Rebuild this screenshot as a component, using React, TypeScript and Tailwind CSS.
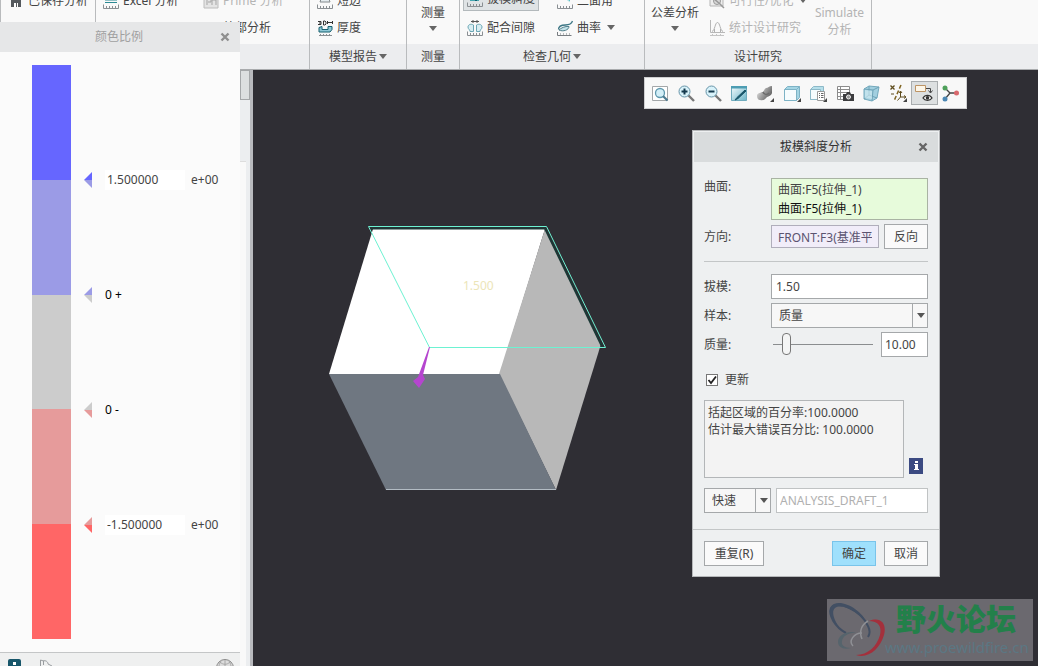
import { useState } from "react";
import type { ReactNode } from "react";
import clsx from "clsx";

interface Segment {
  color: string;
  next?: string;
  label?: string;
  value?: string;
}

const segments: Segment[] = [
  { color: "#6666ff", next: "#9b9be6", value: "1.500000" },
  { color: "#9b9be6", next: "#cccccc", label: "0 +" },
  { color: "#cccccc", next: "#e69b9b", label: "0 -" },
  { color: "#e69b9b", next: "#ff6666", value: "-1.500000" },
  { color: "#ff6666" },
];

/* ---------- small shared pieces ---------- */

const Caret = ({ className }: { className?: string }) => (
  <svg
    viewBox="0 0 8 5"
    className={clsx("h-[5px] w-2 shrink-0 fill-current", className)}
  >
    <path d="M0 0h8L4 5z" />
  </svg>
);

const CloseIcon = () => (
  <svg viewBox="0 0 10 10" className="h-[10px] w-[10px]">
    <path d="M1.500 1.500l7 7M8.500 1.500l-7 7" stroke="currentColor" strokeWidth="2.400" />
  </svg>
);

const Icon = ({ children }: { children: ReactNode }) => (
  <svg viewBox="0 0 16 16" className="h-4 w-4 shrink-0" fill="none">
    {children}
  </svg>
);

const Ruler = ({ color = "#8a8f93" }: { color?: string }) => (
  <path d="M.5 11.5v4h15v-4M3.5 13v2M6.5 13v2M9.5 13v2M12.5 13v2" stroke={color} />
);

/* ---------- ribbon ---------- */

const SaveIcon = () => (
  <Icon>
    <path d="M3 2h10v12H3z" fill="#55595d" />
    <path d="M5 2h6v5H5z" fill="#fff" />
    <path d="M6 10h4v4H6z" fill="#fff" />
    <path d="M8 10h1v4H8z" fill="#55595d" />
  </Icon>
);

const ExcelIcon = () => (
  <Icon>
    <path d="M2 7l3-5h7l2 5z" fill="#8ccbd0" stroke="#2c8a94" />
    <path d="M2 9.5h12" stroke="#2c8a94" />
    <Ruler />
  </Icon>
);

const PrimeIcon = () => (
  <Icon>
    <path d="M1 3h14v12H1z" fill="#e4e4e4" stroke="#bcbcbc" />
    <path d="M4 12V5h4v4H5M9 12V7h4v5" stroke="#a5a5a5" />
  </Icon>
);

const EdgeIcon = () => (
  <Icon>
    <path d="M3 9l2-6h6l2 6z" fill="#e6edf0" stroke="#848a8e" />
    <Ruler />
  </Icon>
);

const ThicknessIcon = () => (
  <Icon>
    <path d="M1 1.5h3v3H1M2 3h2M6.5 1v4h1.5l1-1V2L8 1zM10.5 2.5h5M10.5 1v3M15.5 1v3" stroke="#333" />
    <path d="M2 7.5l3-1v3h6v-3h4v3l-2 2.5H2z" fill="#8fc8d6" stroke="#17606f" />
    <path d="M2 15.5h13M3.5 14v1M6.5 14v1M9.5 14v1M12.5 14v1" stroke="#8a8f93" />
  </Icon>
);

const DraftIcon = () => (
  <Icon>
    <path d="M3 9h4l1-7h4v8H3z" fill="#46a7b0" />
    <path d="M8 7h2v3H8z" fill="#0d5f70" />
    <Ruler />
  </Icon>
);

const ClearanceIcon = () => (
  <Icon>
    <path d="M4 1.5h8M6 0v3M10 0v3" stroke="#555" />
    <path
      d="M6.5 5C4 3.500 1 4.500 1 7s2 2 2 4.500h3.500zM9.500 5C12 3.500 15 4.500 15 7s-2 2-2 4.500H9.500z"
      fill="#d9eef3"
      stroke="#6ba6b4"
    />
    <Ruler />
  </Icon>
);

const DihedralIcon = () => (
  <Icon>
    <path d="M4 2h9v7L8 5z" fill="#5fbfc6" />
    <path d="M4 2l9 7" stroke="#bfe8ea" />
    <Ruler />
  </Icon>
);

const CurvatureIcon = () => (
  <Icon>
    <path d="M1.500 9.500c0-4 4-4.500 7-4.500s6-.500 7-4" stroke="#3b7584" strokeWidth="1.300" />
    <path d="M2 10c4 2 10 0 10-3.500C8 6 4 8 2 10z" fill="#c5e3ea" stroke="#4f7f8b" />
    <path d="M.5 12v3.500h14M3.500 13.500v1M6.500 13.500v1M9.500 13.500v1M12.500 13.500v1" stroke="#777c80" />
  </Icon>
);

const FeasibilityIcon = () => (
  <Icon>
    <path d="M1 2h13v11H1z" fill="#eee" stroke="#b5b5b5" />
    <circle cx="8" cy="8" r="3.500" fill="#d8d8d8" stroke="#999" />
    <path d="M10.500 10.500L15 15M4 5l7 6" stroke="#999" strokeWidth="1.500" />
  </Icon>
);

const StatsIcon = () => (
  <Icon>
    <path d="M1.500 0v12.500H16" stroke="#b8b8b8" />
    <path d="M3 11.500c3-1 3-9 5.500-9s2.500 8 5.500 9M5.500 12v-3M11.500 12v-3" stroke="#b0b0b0" />
    <path d="M1 15.500h14M3.500 14v1M7.500 14v1M11.500 14v1" stroke="#c4c4c4" />
  </Icon>
);

interface RibbonGroupProps {
  title?: string;
  menu?: boolean;
  className?: string;
  children?: ReactNode;
}

const RibbonGroup = ({ title, menu, className, children }: RibbonGroupProps) => (
  <section
    className={clsx(
      "flex h-full shrink-0 flex-col border-r border-[#b9bbbd]",
      className
    )}
  >
    <div className="flex h-11 items-end overflow-hidden">{children}</div>
    <div className="flex h-[25px] items-center justify-center gap-[2px] bg-[#ecedef]">
      {title}
      {menu && <Caret className="text-[#666]" />}
    </div>
  </section>
);

interface RibbonButtonProps {
  icon: ReactNode;
  label: string;
  menu?: boolean;
  active?: boolean;
  disabled?: boolean;
}

const RibbonButton = ({ icon, label, menu, active, disabled }: RibbonButtonProps) => (
  <button
    type="button"
    disabled={disabled}
    className={clsx(
      "flex items-center gap-1 whitespace-nowrap border px-[3px]",
      active
        ? "mb-[3px] h-6 border-[#b3b9bc] bg-[#dfe3e5]"
        : "h-[27px] border-transparent",
      disabled && "text-[#b4b4b4]"
    )}
  >
    {icon}
    {label}
    {menu && <Caret className="ml-[2px] text-[#666]" />}
  </button>
);

const RibbonColumn = ({
  className,
  children,
}: {
  className?: string;
  children: ReactNode;
}) => (
  <div className={clsx("flex shrink-0 flex-col items-start pb-[3px]", className)}>
    {children}
  </div>
);

const LargeMenuButton = ({ label }: { label: string }) => (
  <button
    type="button"
    className="flex h-11 flex-col items-center gap-1 whitespace-nowrap pt-1"
  >
    <span className="leading-[18px]">{label}</span>
    <Caret className="text-[#666]" />
  </button>
);

const Ribbon = () => (
  <header className="flex h-[70px] w-full shrink-0 overflow-hidden border-b border-[#a9abad] bg-[#f9f9f9]">
    <RibbonGroup className="w-24 border-l">
      <RibbonColumn className="pl-[3px]">
        <RibbonButton icon={<SaveIcon />} label="已保存分析" />
        <div className="h-[27px]" />
      </RibbonColumn>
    </RibbonGroup>
    <RibbonGroup className="w-[214px]">
      <RibbonColumn className="w-[100px] pl-[3px]">
        <RibbonButton icon={<ExcelIcon />} label="Excel 分析" />
        <div className="h-[27px]" />
      </RibbonColumn>
      <RibbonColumn className="pl-[3px]">
        <RibbonButton icon={<PrimeIcon />} label="Prime 分析" disabled />
        <RibbonButton icon={<PrimeIcon />} label="外部分析" />
      </RibbonColumn>
    </RibbonGroup>
    <RibbonGroup title="模型报告" menu className="w-[97px]">
      <RibbonColumn className="pl-[3px]">
        <RibbonButton icon={<EdgeIcon />} label="短边" />
        <RibbonButton icon={<ThicknessIcon />} label="厚度" />
      </RibbonColumn>
    </RibbonGroup>
    <RibbonGroup title="测量" className="w-[53px]">
      <div className="flex flex-1 justify-center">
        <LargeMenuButton label="测量" />
      </div>
    </RibbonGroup>
    <RibbonGroup title="检查几何" menu className="w-[185px]">
      <RibbonColumn className="w-[90px] pl-[3px]">
        <RibbonButton icon={<DraftIcon />} label="拔模斜度" active />
        <RibbonButton icon={<ClearanceIcon />} label="配合间隙" />
      </RibbonColumn>
      <RibbonColumn className="pl-[3px]">
        <RibbonButton icon={<DihedralIcon />} label="二面角" />
        <RibbonButton icon={<CurvatureIcon />} label="曲率" menu />
      </RibbonColumn>
    </RibbonGroup>
    <RibbonGroup title="设计研究" className="w-[227px]">
      <div className="flex w-[60px] justify-center">
        <LargeMenuButton label="公差分析" />
      </div>
      <RibbonColumn className="w-[103px]">
        <RibbonButton icon={<FeasibilityIcon />} label="可行性/优化" menu disabled />
        <RibbonButton icon={<StatsIcon />} label="统计设计研究" disabled />
      </RibbonColumn>
      <button
        type="button"
        disabled
        className="flex h-11 flex-1 flex-col items-center pt-1 leading-[17px] text-[#b4b4b4]"
      >
        <span>Simulate</span>
        <span>分析</span>
      </button>
    </RibbonGroup>
    <div className="flex flex-1 flex-col">
      <div className="h-11" />
      <div className="flex-1 bg-[#ecedef]" />
    </div>
  </header>
);

/* ---------- colour scale window ---------- */

const Marker = ({ top, bottom }: { top: string; bottom?: string }) => (
  <svg viewBox="0 0 8 16" className="h-4 w-2">
    <path d="M8 0v8H0z" fill={top} />
    <path d="M8 16V8H0z" fill={bottom} />
  </svg>
);

const ColorScale = () => (
  <section className="absolute inset-y-0 left-0 z-10 flex w-60 flex-col pt-[22px]">
    <div className="flex h-[30px] shrink-0 items-center bg-[#e6e7e8] text-[#a0a0a0]">
      <h2 className="flex-1 pl-7 text-center">颜色比例</h2>
      <button
        type="button"
        aria-label="关闭"
        className="flex w-[30px] justify-center text-[#8f8f8f]"
      >
        <CloseIcon />
      </button>
    </div>
    <div className="flex flex-1 items-start overflow-hidden border-b border-[#c4c6c7] bg-[#fbfbfb] pl-8 pt-[13px]">
      <div className="flex h-[574px] w-[39px] flex-col">
        {segments.map(({ color }) => (
          <div key={color} className="flex-1" style={{ background: color }} />
        ))}
      </div>
      <div className="pl-[13px] pt-[57px]">
        {segments.slice(0, 4).map(({ color, next, label, value }) => (
          <div key={color} className="flex h-[115px] items-center">
            <Marker top={color} bottom={next} />
            {value ? (
              <label className="ml-[13px] flex items-center text-[#444]">
                <input
                  defaultValue={value}
                  className="mr-[6px] h-5 w-20 bg-white px-[2px]"
                />
                e+00
              </label>
            ) : (
              <span className="ml-[13px] text-black">{label}</span>
            )}
          </div>
        ))}
      </div>
    </div>
    <footer className="flex h-[13px] shrink-0 items-start gap-4 overflow-hidden bg-[#eff0f0] pl-[6px] pr-[5px] pt-[5px]">
      <Icon>
        <rect x="2" y="1" width="13" height="14" rx="2" fill="#17566a" />
        <path d="M7 4h3v3H7z" fill="#fff" />
      </Icon>
      <Icon>
        <path d="M2.500 15V2l3 1v4M5 3c3-1 5 1 5 3l4 2" stroke="#999da0" />
      </Icon>
      <svg viewBox="0 0 20 20" className="ml-auto h-5 w-5" fill="none">
        <circle cx="10" cy="10" r="8.500" fill="#ddd" stroke="#888" />
        <path d="M10 2v16M2 10h16M5 4c3 3 7 3 10 0M6 3c-3 5-3 9 0 14M14 3c3 5 3 9 0 14" stroke="#a8a8a8" />
      </svg>
    </footer>
  </section>
);

/* ---------- view toolbar ---------- */

const Lens = ({ sign }: { sign: string }) => (
  <>
    <path d="M11 11l6 6" stroke="#777" strokeWidth="2.400" />
    <circle cx="7.500" cy="7.500" r="5.500" fill="#d8f2fa" stroke="#6794a8" />
    <path d={sign} stroke="#14394d" strokeWidth="2" />
  </>
);

const Flyout = () => <path d="M18 14v4h-4z" fill="#444" />;

interface Tool {
  name: string;
  art: ReactNode;
  active?: boolean;
}

const tools: Tool[] = [
  {
    name: "重新调整",
    art: (
      <>
        <path d="M1.500 2.500h15v14h-15z" fill="#fff" stroke="#a3a7a9" />
        <circle cx="9" cy="9" r="4.500" fill="#d3eff8" stroke="#5f98ae" strokeWidth="1.300" />
        <path d="M12 12l4.500 4.500" stroke="#4d7d92" strokeWidth="2.200" />
      </>
    ),
  },
  { name: "放大", art: <Lens sign="M4.500 7.500h6M7.500 4.500v6" /> },
  { name: "缩小", art: <Lens sign="M4.500 7.500h6" /> },
  {
    name: "重画",
    art: (
      <>
        <defs>
          <linearGradient id="repaint" x1="0" y1="0" x2="1" y2="1">
            <stop offset="0" stopColor="#f4fbfd" />
            <stop offset="1" stopColor="#6bb5c8" />
          </linearGradient>
        </defs>
        <path d="M1.500 2.500h15v14h-15z" fill="url(#repaint)" stroke="#6fabbd" />
        <path d="M1 2h16v2.500H1z" fill="#4d9db3" />
        <path d="M15 6L7 13.500 5 16l3-1.500L16 7z" fill="#19566a" stroke="#19566a" />
      </>
    ),
  },
  {
    name: "渲染选项",
    art: (
      <>
        <defs>
          <linearGradient id="shade" x1="0" y1="0" x2="1" y2=".6">
            <stop offset="0" stopColor="#fafafa" />
            <stop offset=".55" stopColor="#9f9f9f" />
            <stop offset="1" stopColor="#626262" />
          </linearGradient>
        </defs>
        <path
          d="M1 12c0-3 3-3 5-4 2 0 2-3 4-4 2 0 3-2 6-2v7c-1 3-3 3-5 4-2 2-3 4-7 3-2 0-3-2-3-4z"
          fill="url(#shade)"
        />
        <path d="M7 8c1 3 4 3 6 1" stroke="#6c6c6c" strokeWidth="1.500" />
        <Flyout />
      </>
    ),
  },
  {
    name: "显示样式",
    art: (
      <>
        <path d="M1.500 5.500l3-3h12v11l-3 3h-12z" fill="#a4d5e4" stroke="#7db3c6" />
        <path d="M1.500 5.500h12v11h-12z" fill="#f6fcfe" stroke="#7db3c6" />
        <path d="M13.500 5.500l3-3" stroke="#7db3c6" />
        <Flyout />
      </>
    ),
  },
  {
    name: "已保存方向",
    art: (
      <>
        <path d="M1.500 5.500l3-3h10v10l-3 3h-10z" fill="#b6dfea" stroke="#8db9c8" />
        <path d="M1.500 5.500h10v10h-10z" fill="#f4fbfd" stroke="#8db9c8" />
        <path d="M8.500 7.500h7v9h-7z" fill="#fff" stroke="#999" />
        <path d="M10 9.500h1M12 9.500h2.500M10 11.500h1M12 11.500h2.500M10 13.500h1M12 13.500h2.500" stroke="#666" />
        <Flyout />
      </>
    ),
  },
  {
    name: "视图管理器",
    art: (
      <>
        <path d="M1.500 2.500h12v13h-12z" fill="#fff" />
        <path d="M1.500 2.500h12v13h-12zM1.500 5.500h12M1.500 8.500h12M1.500 12.500h12M4.500 2.500v13" stroke="#8c8c8c" />
        <path d="M7 10h3l1-2h3l1 2h3v7H7z" fill="#3c3c3e" />
        <circle cx="12.500" cy="13" r="2" fill="#999" stroke="#eee" />
      </>
    ),
  },
  {
    name: "透视图",
    art: (
      <>
        <path d="M2 5l5-3 10 1-2 11-5 3-8-2z" fill="#a2cfdf" stroke="#74a9bc" />
        <path d="M2 5l9 1 6-3M11 6l-1 11M2 15l5-4 8 3M7 11V2" stroke="#6ea3b7" />
        <path d="M3 6l7 1v8l-7-1z" fill="#d6eef5" opacity=".6" />
      </>
    ),
  },
  {
    name: "基准显示过滤器",
    art: (
      <>
        <path d="M1.500 1.500l4 4M5.500 1.500l-4 4" stroke="#5d4b1c" strokeWidth="1.300" />
        <path d="M12 1L5 17" stroke="#806522" strokeWidth="1.500" strokeDasharray="4 2" />
        <path d="M2 10h3M11.500 7.500v5.500h5M11.500 13l-3 3.500M10 9l1.500-2L13 9M15 11.500l2 1.500-2 1.500" stroke="#5d4b1c" />
        <Flyout />
      </>
    ),
  },
  {
    name: "注释显示",
    active: true,
    art: (
      <>
        <path d="M.500 1.500h10v6H.500z" fill="#fdf6e8" stroke="#bd9465" />
        <path d="M11 4.500h4.500v4M13.500 6.500l2 2.500 2-2.500" stroke="#444" />
        <path d="M8 14c2-3.500 7-3.500 9 0-2 3-7 3-9 0z" fill="#fff" stroke="#333" strokeWidth="1.300" />
        <circle cx="12.500" cy="13.800" r="1.800" fill="#333" />
      </>
    ),
  },
  {
    name: "旋转中心",
    art: (
      <>
        <path d="M4 4l5 5h6M9 9l-5 6" stroke="#444" strokeWidth="1.300" />
        <circle cx="4" cy="4" r="2.500" fill="#4ea05a" />
        <circle cx="15.500" cy="9" r="2.500" fill="#d9696d" />
        <circle cx="4" cy="15" r="2.500" fill="#4c87b3" />
      </>
    ),
  },
];

const ViewToolbar = () => (
  <div className="absolute right-[71px] top-[7px] flex h-8 w-[323px] items-center border border-[#cfcfd1] bg-[#f8f8f8] px-[2px]">
    {tools.map(({ name, art, active }) => (
      <button
        key={name}
        type="button"
        aria-label={name}
        className={clsx(
          "flex h-6 flex-1 items-center justify-center border",
          active ? "border-[#a9adaf] bg-[#dde0e1]" : "border-transparent"
        )}
      >
        <svg viewBox="0 0 19 19" className="h-[19px] w-[19px]" fill="none">
          {art}
        </svg>
      </button>
    ))}
  </div>
);

/* ---------- draft analysis dialog ---------- */

const Select = ({
  id,
  label,
  options,
  className,
}: {
  id: string;
  label?: string;
  options: string[];
  className?: string;
}) => (
  <div className={clsx("relative", className)}>
    <select
      id={id}
      aria-label={label}
      className="block h-[25px] w-full appearance-none border border-[#a5a8aa] bg-[#f7f7f7] pl-[7px]"
    >
      {options.map((option) => (
        <option key={option}>{option}</option>
      ))}
    </select>
    <span className="pointer-events-none absolute inset-y-0 right-0 flex w-4 items-center justify-center border-l border-[#a5a8aa]">
      <Caret className="text-[#555]" />
    </span>
  </div>
);

const fieldLabel = "w-[67px] shrink-0";
const plainButton = "h-[25px] border border-[#a5a8aa] bg-[#fafafa]";

const DraftDialog = () => {
  const [quality, setQuality] = useState(10);
  const [update, setUpdate] = useState(true);

  return (
    <form className="absolute right-[98px] top-[60px] w-[248px] border border-[#b5b7b9] bg-[#eef0f1] text-[#444]">
      <div className="m-px flex h-[30px] items-center bg-[#d9dcdd]">
        <h2 className="flex-1 pl-[30px] text-center text-[#333]">
          拔模斜度分析
        </h2>
        <button
          type="button"
          aria-label="关闭"
          className="flex w-[30px] justify-center text-[#666]"
        >
          <CloseIcon />
        </button>
      </div>

      <div className="flex flex-col px-[11px] pt-[15px]">
        <div className="flex">
          <label htmlFor="surfaces" className={clsx(fieldLabel, "leading-[18px]")}>
            曲面:
          </label>
          <ul
            id="surfaces"
            className="h-[42px] flex-1 border border-[#a9b3a3] bg-[#e7fbdb] px-[6px] pt-px leading-[19px]"
          >
            <li>曲面:F5(拉伸_1)</li>
            <li className="text-[#111]">曲面:F5(拉伸_1)</li>
          </ul>
        </div>

        <div className="mt-1 flex items-center">
          <label htmlFor="direction" className={fieldLabel}>
            方向:
          </label>
          <input
            id="direction"
            defaultValue="FRONT:F3(基准平面)"
            className="h-[23px] w-[108px] border border-[#b0aebb] bg-[#f1edf9] px-[6px] text-[#5b5470]"
          />
          <button type="button" className={clsx(plainButton, "ml-[5px] flex-1")}>
            反向
          </button>
        </div>

        <hr className="my-3 border-[#c3c6c7]" />

        <div className="flex flex-col gap-1">
          <div className="flex items-center">
            <label htmlFor="draft" className={fieldLabel}>
              拔模:
            </label>
            <input
              id="draft"
              defaultValue="1.50"
              className="h-[25px] min-w-0 flex-1 border border-[#a5a8aa] bg-white px-1"
            />
          </div>
          <div className="flex items-center">
            <label htmlFor="sample" className={fieldLabel}>
              样本:
            </label>
            <Select id="sample" options={["质量", "数目", "步长"]} className="flex-1" />
          </div>
          <div className="flex items-center">
            <label htmlFor="quality" className={fieldLabel}>
              质量:
            </label>
            <input
              id="quality"
              type="range"
              min={0}
              max={100}
              value={quality}
              onChange={(e) => setQuality(Number(e.target.value))}
              className="ml-[2px] h-[22px] w-[100px] appearance-none bg-transparent [&::-webkit-slider-runnable-track]:h-px [&::-webkit-slider-runnable-track]:bg-[#8a8d8f] [&::-webkit-slider-thumb]:-mt-[11px] [&::-webkit-slider-thumb]:h-[22px] [&::-webkit-slider-thumb]:w-[9px] [&::-webkit-slider-thumb]:appearance-none [&::-webkit-slider-thumb]:rounded-sm [&::-webkit-slider-thumb]:border [&::-webkit-slider-thumb]:border-[#777] [&::-webkit-slider-thumb]:bg-[#f4f5f5]"
            />
            <input
              aria-label="质量值"
              value={quality.toFixed(2)}
              onChange={(e) => setQuality(Number(e.target.value) || 0)}
              className="ml-2 h-[25px] min-w-0 flex-1 border border-[#a5a8aa] bg-white px-[3px]"
            />
          </div>
        </div>

        <label className="mt-[13px] flex items-center gap-[7px] pl-[2px] leading-5">
          <span className="relative flex">
            <input
              type="checkbox"
              checked={update}
              onChange={(e) => setUpdate(e.target.checked)}
              className="h-3 w-3 appearance-none border border-[#777] bg-white"
            />
            {update && (
              <svg viewBox="0 0 12 12" className="pointer-events-none absolute inset-0 h-3 w-3">
                <path d="M2.500 6l2.500 3 5-6.500" fill="none" stroke="#222" strokeWidth="1.800" />
              </svg>
            )}
          </span>
          更新
        </label>

        <div className="mt-[10px] flex items-end gap-[5px]">
          <textarea
            aria-label="结果"
            readOnly
            defaultValue={"括起区域的百分率:100.0000\n估计最大错误百分比: 100.0000"}
            className="block h-[78px] w-[200px] resize-none border border-[#b3b6b8] bg-[#f3f3f3] px-[3px] pt-[3px] leading-[17px]"
          />
          <button type="button" aria-label="信息" className="mb-1 h-4 w-[14px] bg-[#3b4a82]">
            <svg viewBox="0 0 14 16" className="h-4 w-[14px]">
              <path d="M6 3h3v2H6zM5 6h4v5h1v1H5v-1h1V7H5z" fill="#fff" />
            </svg>
          </button>
        </div>

        <div className="mt-[10px] flex gap-[5px]">
          <Select id="mode" label="分析类型" options={["快速", "已保存", "特征"]} className="w-[67px]" />
          <input
            aria-label="分析名称"
            disabled
            defaultValue="ANALYSIS_DRAFT_1"
            className="h-[25px] min-w-0 flex-1 border border-[#c0c3c4] bg-white px-[3px] text-[#b0b0b0]"
          />
        </div>
      </div>

      <div className="mt-4 flex border-t border-[#c3c6c7] px-[11px] pb-[10px] pt-[11px]">
        <button type="button" className={clsx(plainButton, "w-[60px]")}>
          重复(R)
        </button>
        <button
          type="submit"
          className="ml-auto h-[25px] w-11 border border-[#79c4ea] bg-[#9fe0fc]"
        >
          确定
        </button>
        <button type="button" className={clsx(plainButton, "ml-2 w-11")}>
          取消
        </button>
      </div>
    </form>
  );
};

/* ---------- 3D view ---------- */

const Model = () => (
  <svg
    viewBox="320 215 300 285"
    className="absolute left-[67px] top-[145px] h-[285px] w-[300px]"
    fill="none"
  >
    <path d="M373 229h172l-45 145H329z" fill="#fff" />
    <path d="M545 229l56 115-45 146-57-116z" fill="#b8b8b8" />
    <path d="M329 374h171l56 116H386z" fill="#6f7781" />
    <path d="M386 489.500h170" stroke="#b3bcc4" />
    <path d="M371 228.500h174l57 118" stroke="#1c3836" strokeWidth="2" />
    <path d="M368.500 226.500h178l59 121h-176z" stroke="#6df2d2" />
    <path d="M429 347h1l-7 28 2 4-6 9-6-7 5-4z" fill="#b545cf" />
    <text x="463" y="290" fill="#ece5b8" className="text-xs">
      1.500
    </text>
  </svg>
);

const Watermark = () => (
  <div className="absolute bottom-[5px] right-[5px] flex h-[62px] w-[206px] bg-[#6b696f]">
    <svg viewBox="0 0 58 62" className="h-[62px] w-[58px] shrink-0" fill="none">
      <path d="M19 34C8 28 1 16 4 9 9 1 33 10 41 27c2 4 2 8 0 11" stroke="#424f63" strokeWidth="2" />
      <path d="M12 28C3 20 0 9 7 5c10-4 28 6 34 21C32 13 16 4 8 9c-4 3-1 12 4 19z" fill="#424f63" />
      <path d="M41 22c-7 4-9 11-6 18" stroke="#8f9095" strokeWidth="1.500" />
      <path d="M42 22c12-5 18 3 15 14-4 14-16 24-28 20 12 0 21-9 24-20 2-9-2-14-11-14z" fill="#a3303c" />
      <path d="M30 34c-9-3-19 2-19 9 0 5 5 8 13 6-7 0-10-3-9-7 1-5 7-9 15-8z" fill="#56646c" />
      <path d="M26 47c-5-5 1-13 9-13" stroke="#8f9095" strokeWidth="1.500" />
    </svg>
    <div className="flex flex-1 flex-col whitespace-nowrap pt-1">
      <strong className="pl-[11px] text-[30px] font-black leading-8 text-[#23804a]">
        野火论坛
      </strong>
      <a href="#forum" className="pt-[2px] text-[15px] leading-5 text-[#5b7783]">
        www.proewildfire.cn
      </a>
    </div>
  </div>
);

const App = () => (
  <div className="relative flex h-screen flex-col overflow-hidden bg-[#2f2e34] font-['Noto_Sans','Noto_Sans_CJK_SC',sans-serif] text-xs text-[#444]">
    <Ribbon />
    <div className="flex flex-1">
      {/* docked navigator, mostly under the colour scale window */}
      <aside className="flex w-[253px] shrink-0 flex-col items-end border-r-[3px] border-[#b9babe] bg-[#eceef0]">
        <div className="h-[30px] w-[10px] border border-[#a4a7a9] bg-[#dcdfe0]" />
        <div className="mr-1 mt-[61px] w-[6px] flex-1 border-t border-[#ddd] bg-[#f9f9f9]" />
      </aside>
      <main className="relative flex-1 overflow-hidden">
        <Model />
        <ViewToolbar />
        <DraftDialog />
        <Watermark />
      </main>
    </div>
    <ColorScale />
  </div>
);

export default App;
